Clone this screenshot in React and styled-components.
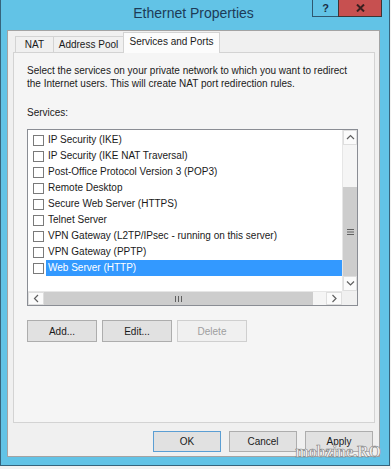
import React from "react";
import styled, { createGlobalStyle } from "styled-components";

const GlobalStyle = createGlobalStyle`
  html, body {
    margin: 0;
    padding: 0;
    background: #f2f2f2;
  }
  body {
    font-family: "Liberation Sans", Arial, sans-serif;
  }
`;

const Window = styled.div`
  position: relative;
  width: 390px;
  height: 466px;
  box-sizing: border-box;
  background: #62c3e6;
  border: 1px solid #36647c;
  border-top: none;
  padding: 0 9px 8px 6px;
  display: flex;
  flex-direction: column;
`;

const TitleBar = styled.div`
  height: 30px;
  flex-shrink: 0;
  display: grid;
  grid-template-columns: 1fr auto 1fr;
  align-items: start;
`;

const Title = styled.div`
  grid-column: 2;
  padding-top: 5px;
  font-size: 14px;
  line-height: 16px;
  color: #1d3b57;
`;

const Controls = styled.div`
  grid-column: 3;
  justify-self: end;
  display: flex;
  margin-right: -2px;
`;

const CaptionButton = styled.div`
  box-sizing: border-box;
  width: ${(p) => p.$w}px;
  height: 17px;
  display: flex;
  align-items: center;
  justify-content: center;
  border: 1px solid ${(p) => (p.$close ? "#3d3434" : "#2f5870")};
  border-top: none;
  ${(p) => (p.$close ? "" : "border-right: none;")}
  background: ${(p) => (p.$close ? "#c75050" : "transparent")};
  font-size: 11px;
  font-weight: 700;
  color: #1b2f45;
`;

const Body = styled.div`
  flex: 1;
  box-sizing: border-box;
  background: #f0f0f0;
  border: 1px solid #a3a3a3;
  padding: 1px 4px 4px 5px;
  display: flex;
  flex-direction: column;
`;

const TabRow = styled.div`
  display: flex;
  align-items: flex-end;
  padding-left: 2px;
  height: 21px;
  flex-shrink: 0;
  margin-bottom: -1px;
  position: relative;
  z-index: 1;
`;

const Tab = styled.div`
  box-sizing: border-box;
  width: ${(p) => p.$w}px;
  height: ${(p) => (p.$active ? 21 : 17)}px;
  margin-left: ${(p) => (p.$first ? 0 : -1)}px;
  border: 1px solid #d3d3d3;
  border-bottom: ${(p) => (p.$active ? "none" : "1px solid #d3d3d3")};
  background: ${(p) => (p.$active ? "#fcfcfc" : "#f0f0f0")};
  font-size: 10px;
  color: #1a1a1a;
  display: flex;
  align-items: center;
  justify-content: center;
  padding-bottom: ${(p) => (p.$active ? 3 : 0)}px;
`;

const Panel = styled.div`
  flex: 1;
  box-sizing: border-box;
  background: #f5f5f5;
  border: 1px solid #d3d3d3;
  padding: 11px 16px 0 13px;
  display: flex;
  flex-direction: column;
`;

const Text = styled.p`
  margin: 0;
  font-size: 10px;
  line-height: 13px;
  color: #1a1a1a;
`;

const Label = styled(Text)`
  margin-top: 16px;
`;

const ListBox = styled.div`
  margin-top: 10px;
  width: 331px;
  height: 177px;
  box-sizing: border-box;
  border: 1px solid #8a8d94;
  background: #fff;
  display: grid;
  grid-template-columns: 1fr 15px;
  grid-template-rows: 1fr 14px;
`;

const Rows = styled.div`
  padding-top: 2px;
  overflow: hidden;
`;

const Row = styled.div`
  height: 16px;
  display: flex;
  align-items: center;
  padding-left: 5px;
`;

const Check = styled.span`
  box-sizing: border-box;
  width: 11px;
  height: 11px;
  flex-shrink: 0;
  border: 1px solid #7a7a7a;
  background: #fff;
  margin-right: 2px;
`;

const ItemText = styled.span`
  flex: 1;
  height: 16px;
  line-height: 16px;
  padding-left: 2px;
  white-space: nowrap;
  font-size: 10px;
  color: ${(p) => (p.$selected ? "#fff" : "#1a1a1a")};
  background: ${(p) => (p.$selected ? "#3399ff" : "transparent")};
`;

const VScroll = styled.div`
  background: #f5f5f5;
  border-left: 1px solid #e6e6e6;
  display: flex;
  flex-direction: column;
`;

const HScroll = styled.div`
  background: #f5f5f5;
  border-top: 1px solid #e6e6e6;
  display: flex;
`;

const Corner = styled.div`
  background: #f0f0f0;
`;

const ArrowBox = styled.div`
  box-sizing: border-box;
  flex-shrink: 0;
  width: ${(p) => (p.$h ? "16px" : "auto")};
  height: ${(p) => (p.$h ? "auto" : "15px")};
  border: 1px solid #dedede;
  background: #fbfbfb;
  display: flex;
  align-items: center;
  justify-content: center;
`;

const Track = styled.div`
  flex: 1;
`;

const Thumb = styled.div`
  flex-shrink: 0;
  width: ${(p) => (p.$h ? "269px" : "auto")};
  height: ${(p) => (p.$h ? "auto" : "89px")};
  background: #cdcdcd;
  display: flex;
  align-items: center;
  justify-content: center;
`;

const ButtonRow = styled.div`
  display: flex;
  gap: 5px;
  margin-top: 14px;
`;

const Button = styled.div`
  box-sizing: border-box;
  width: ${(p) => p.$w}px;
  height: ${(p) => p.$h}px;
  display: flex;
  align-items: center;
  justify-content: center;
  font-size: 10px;
  color: ${(p) => (p.$disabled ? "#9e9e9e" : "#1a1a1a")};
  background: ${(p) => (p.$disabled ? "#f0f0f0" : "#e1e1e1")};
  border: 1px solid
    ${(p) => (p.$default ? "#5b9ed3" : p.$disabled ? "#cfcfcf" : "#adadad")};
`;

const Footer = styled.div`
  display: flex;
  justify-content: flex-end;
  gap: 8px;
  margin-top: 8px;
  padding-right: 2px;
  flex-shrink: 0;
`;

const Watermark = styled.div`
  position: absolute;
  right: 8px;
  bottom: 5px;
  font-family: "Liberation Serif", "Times New Roman", serif;
  font-weight: 700;
  font-size: 16px;
  line-height: 16px;
  color: #f4f4f4;
  -webkit-text-stroke: 0.6px #7c7c7c;
  pointer-events: none;
`;

const Chevron = ({ dir }) => {
  const pts = {
    up: "1,5 4.5,1.5 8,5",
    down: "1,1.5 4.5,5 8,1.5",
    left: "5,1 1.5,4.5 5,8",
    right: "1.5,1 5,4.5 1.5,8",
  }[dir];
  const horizontal = dir === "left" || dir === "right";
  return (
    <svg
      width={horizontal ? 7 : 9}
      height={horizontal ? 9 : 7}
      viewBox={horizontal ? "0 0 7 9" : "0 0 9 7"}
    >
      <polyline points={pts} fill="none" stroke="#606060" strokeWidth="1.2" />
    </svg>
  );
};

const Grip = ({ h }) =>
  h ? (
    <svg width="7" height="6" viewBox="0 0 7 6">
      <path d="M0.5 0v6M3.5 0v6M6.5 0v6" stroke="#606060" strokeWidth="1" />
    </svg>
  ) : (
    <svg width="7" height="6" viewBox="0 0 7 6">
      <path d="M0 0.5h7M0 3h7M0 5.5h7" stroke="#606060" strokeWidth="1" />
    </svg>
  );

const services = [
  "IP Security (IKE)",
  "IP Security (IKE NAT Traversal)",
  "Post-Office Protocol Version 3 (POP3)",
  "Remote Desktop",
  "Secure Web Server (HTTPS)",
  "Telnet Server",
  "VPN Gateway (L2TP/IPsec - running on this server)",
  "VPN Gateway (PPTP)",
  "Web Server (HTTP)",
];

export default function App() {
  return (
    <>
      <GlobalStyle />
      <Window>
        <TitleBar>
          <Title>Ethernet Properties</Title>
          <Controls>
            <CaptionButton $w={26}>?</CaptionButton>
            <CaptionButton $w={44} $close>
              <svg width="9" height="8" viewBox="0 0 9 8">
                <path d="M1 0.5l7 7M8 0.5l-7 7" stroke="#3a1f1f" strokeWidth="2" />
              </svg>
            </CaptionButton>
          </Controls>
        </TitleBar>

        <Body>
          <TabRow>
            <Tab $w={39} $first>NAT</Tab>
            <Tab $w={71}>Address Pool</Tab>
            <Tab $w={97} $active>Services and Ports</Tab>
          </TabRow>

          <Panel>
            <Text>
              Select the services on your private network to which you want to redirect
              <br />
              the Internet users. This will create NAT port redirection rules.
            </Text>
            <Label>Services:</Label>

            <ListBox>
              <Rows>
                {services.map((name, i) => {
                  const selected = i === services.length - 1;
                  return (
                    <Row key={name}>
                      <Check />
                      <ItemText $selected={selected}>{name}</ItemText>
                    </Row>
                  );
                })}
              </Rows>
              <VScroll>
                <ArrowBox>
                  <Chevron dir="up" />
                </ArrowBox>
                <Track />
                <Thumb>
                  <Grip />
                </Thumb>
                <ArrowBox>
                  <Chevron dir="down" />
                </ArrowBox>
              </VScroll>
              <HScroll>
                <ArrowBox $h>
                  <Chevron dir="left" />
                </ArrowBox>
                <Thumb $h>
                  <Grip h />
                </Thumb>
                <Track />
                <ArrowBox $h>
                  <Chevron dir="right" />
                </ArrowBox>
              </HScroll>
              <Corner />
            </ListBox>

            <ButtonRow>
              <Button $w={70} $h={22}>Add...</Button>
              <Button $w={70} $h={22}>Edit...</Button>
              <Button $w={70} $h={22} $disabled>Delete</Button>
            </ButtonRow>
          </Panel>

          <Footer>
            <Button $w={68} $h={21} $default>OK</Button>
            <Button $w={68} $h={21}>Cancel</Button>
            <Button $w={68} $h={21}>Apply</Button>
          </Footer>
        </Body>

        <Watermark>mobzine.RO</Watermark>
      </Window>
    </>
  );
}
